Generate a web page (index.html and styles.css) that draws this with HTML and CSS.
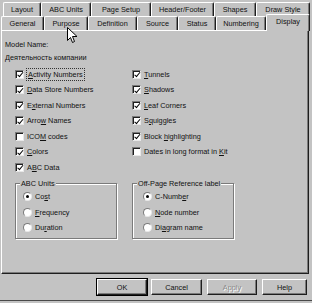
FILE: index.html
```html
<!DOCTYPE html>
<html lang="en">
<head>
  <meta charset="UTF-8">
  <title>Model Properties</title>
  <link rel="stylesheet" href="styles.css">
</head>
<body>

  <div class="dialog">
    <div class="tab-row back">
      <div class="tab w-layout">Layout</div>
      <div class="tab w-abc">ABC Units</div>
      <div class="tab w-page">Page Setup</div>
      <div class="tab w-header">Header/Footer</div>
      <div class="tab w-shapes">Shapes</div>
      <div class="tab w-draw">Draw Style</div>
    </div>
    <div class="tab-row front">
      <div class="tab w-general">General</div>
      <div class="tab w-purpose">Purpose</div>
      <div class="tab w-definition">Definition</div>
      <div class="tab w-source">Source</div>
      <div class="tab w-status">Status</div>
      <div class="tab w-numbering">Numbering</div>
      <div class="tab w-display active">Display</div>
    </div>

    <div class="page">
      <div class="line">Model Name:</div>
      <div class="line">Деятельность компании</div>

      <div class="check-cols">
        <div class="col left">
          <div class="check"><span class="box on"></span><span class="focus"><u>A</u>ctivity Numbers</span></div>
          <div class="check"><span class="box on"></span><span><u>D</u>ata Store Numbers</span></div>
          <div class="check"><span class="box on"></span><span>E<u>x</u>ternal Numbers</span></div>
          <div class="check"><span class="box on"></span><span>Arro<u>w</u> Names</span></div>
          <div class="check"><span class="box"></span><span>ICO<u>M</u> codes</span></div>
          <div class="check"><span class="box on"></span><span><u>C</u>olors</span></div>
          <div class="check"><span class="box on"></span><span>A<u>B</u>C Data</span></div>
        </div>
        <div class="col">
          <div class="check"><span class="box on"></span><span><u>T</u>unnels</span></div>
          <div class="check"><span class="box on"></span><span><u>S</u>hadows</span></div>
          <div class="check"><span class="box on"></span><span><u>L</u>eaf Corners</span></div>
          <div class="check"><span class="box on"></span><span>S<u>q</u>uiggles</span></div>
          <div class="check"><span class="box on"></span><span>Block <u>h</u>ighlighting</span></div>
          <div class="check"><span class="box"></span><span>Dates in long format in <u>K</u>it</span></div>
        </div>
      </div>

      <div class="groups">
        <fieldset class="group">
          <legend>ABC Units</legend>
          <div class="radio"><span class="dot on"></span><span>Co<u>s</u>t</span></div>
          <div class="radio"><span class="dot"></span><span><u>F</u>requency</span></div>
          <div class="radio"><span class="dot"></span><span>Du<u>r</u>ation</span></div>
        </fieldset>
        <fieldset class="group">
          <legend>Off-Page Reference label</legend>
          <div class="radio"><span class="dot on"></span><span>C-Numb<u>e</u>r</span></div>
          <div class="radio"><span class="dot"></span><span><u>N</u>ode number</span></div>
          <div class="radio"><span class="dot"></span><span>Di<u>a</u>gram name</span></div>
        </fieldset>
      </div>
    </div>

    <div class="footer">
      <div class="btn w-ok default">OK</div>
      <div class="btn w-cancel">Cancel</div>
      <div class="btn w-apply disabled">Apply</div>
      <div class="btn w-help">Help</div>
    </div>

    <svg class="cursor" width="12" height="17" viewBox="0 0 12 17">
      <path d="M0.5 0.5 L0.5 13.5 L3.5 10.5 L5.5 15.5 L7.5 14.5 L5.5 9.5 L10 9.5 Z" fill="#fff" stroke="#000" stroke-width="1"/>
    </svg>
  </div>

</body>
</html>
```

FILE: styles.css
```css
* {
  box-sizing: border-box;
}

body {
  margin: 0;
  background: #c3c3c3;
  font-family: "Liberation Sans", Arial, sans-serif;
  font-size: 7.3px;
  color: #111;
}

.dialog {
  position: relative;
  width: 312px;
  height: 303px;
  padding-top: 2px;
}

/* tabs */
.tab-row {
  display: flex;
  height: 14px;
}

.tab-row.back {
  margin-left: 3px;
}

.tab-row.front {
  margin-left: 1px;
}

.tab {
  display: flex;
  align-items: center;
  justify-content: center;
  height: 14px;
  border-top: 1px solid #fff;
  border-left: 1px solid #fff;
  border-right: 1px solid #1e1e1e;
  box-shadow: inset -1px 0 #7a7a7a;
  border-radius: 2px 2px 0 0;
  background: #c3c3c3;
  white-space: nowrap;
}

.tab.active {
  position: relative;
  z-index: 1;
  margin-top: -2px;
  height: 17px;
  padding-bottom: 3px;
}

.w-layout { width: 38px; }
.w-abc { width: 50px; }
.w-page { width: 60px; }
.w-header { width: 63px; }
.w-shapes { width: 42px; }
.w-draw { width: 54px; }

.w-general { width: 43px; }
.w-purpose { width: 44px; }
.w-definition { width: 49px; }
.w-source { width: 41px; }
.w-status { width: 38px; }
.w-numbering { width: 50px; }
.w-display { width: 44px; }

/* page */
.page {
  height: 244px;
  margin: 0 3px 0 1px;
  padding: 6.5px 0 0 3px;
  border-top: 1px solid #fff;
  border-left: 1px solid #fff;
  border-right: 1px solid #1e1e1e;
  border-bottom: 1px solid #1e1e1e;
  box-shadow: inset -1px -1px #7a7a7a;
}

.line {
  height: 13px;
  line-height: 13px;
}

.check-cols {
  display: flex;
  margin: 2.75px 0 0 10px;
}

.col {
  display: flex;
  flex-direction: column;
}

.col.left {
  width: 117px;
}

.check {
  display: flex;
  align-items: center;
  gap: 3px;
  height: 15.5px;
}

.box {
  position: relative;
  width: 9px;
  height: 9px;
  background: #fff;
  border-top: 1px solid #7a7a7a;
  border-left: 1px solid #7a7a7a;
  border-right: 1px solid #e8e8e8;
  border-bottom: 1px solid #e8e8e8;
  box-shadow: inset 1px 1px #1e1e1e;
}

.box.on::after {
  content: "";
  position: absolute;
  left: 2.5px;
  top: 0.5px;
  width: 2px;
  height: 4.5px;
  border: solid #000;
  border-width: 0 1.5px 1.5px 0;
  transform: rotate(40deg);
}

.focus {
  padding: 1px 1px;
  outline: 1px dotted #333;
}

/* group boxes */
.groups {
  display: flex;
  gap: 15px;
  margin: 3.75px 0 0 10px;
}

.group {
  width: 102px;
  margin: 0;
  padding: 1.5px 0 2.5px 7px;
  border: 1px solid #7a7a7a;
  box-shadow: 1px 1px 0 #fff, inset 1px 1px 0 #fff;
}

.group + .group {
  padding-left: 10px;
}

.group legend {
  margin-left: -3px;
  padding: 0 1px;
  line-height: 9px;
  background: #c3c3c3;
}

.group + .group legend {
  margin-left: -6px;
}

.radio {
  display: flex;
  align-items: center;
  gap: 3px;
  height: 15.5px;
}

.dot {
  position: relative;
  width: 9px;
  height: 9px;
  border-radius: 50%;
  background: #fff;
  border: 1px solid;
  border-color: #7a7a7a #e8e8e8 #e8e8e8 #7a7a7a;
}

.dot.on::after {
  content: "";
  position: absolute;
  left: 2px;
  top: 2px;
  width: 3px;
  height: 3px;
  border-radius: 50%;
  background: #000;
}

/* buttons */
.footer {
  display: flex;
  gap: 5px;
  height: 27px;
  padding: 5px 0 0 97px;
  border-bottom: 1px solid #4a4a4a;
}

.btn {
  display: flex;
  align-items: center;
  justify-content: center;
  height: 16px;
  border-top: 1px solid #fff;
  border-left: 1px solid #fff;
  border-right: 1px solid #1e1e1e;
  border-bottom: 1px solid #1e1e1e;
  box-shadow: inset -1px -1px #7a7a7a;
}

.btn.default {
  outline: 1px solid #000;
}

.btn.disabled {
  color: #8a8a8a;
  text-shadow: 1px 1px #fff;
}

.w-ok { width: 50px; margin-right: -1px; }
.w-cancel { width: 51px; }
.w-apply { width: 50px; }
.w-help { width: 45px; }

.cursor {
  position: absolute;
  left: 67px;
  top: 27px;
}
```
